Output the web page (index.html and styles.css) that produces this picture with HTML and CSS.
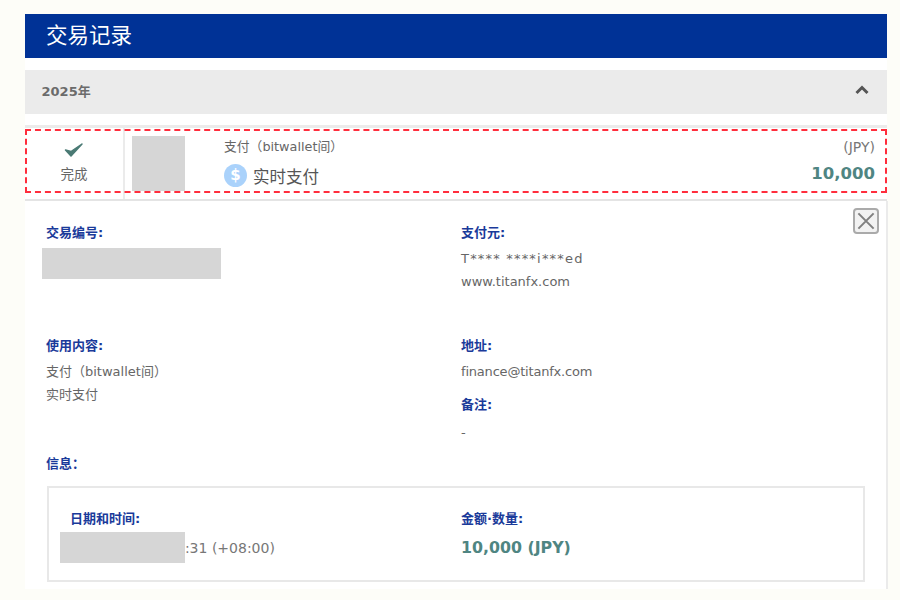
FILE: index.html
```html
<!DOCTYPE html>
<html lang="zh-CN">
<head>
<meta charset="utf-8">
<title>交易记录</title>
<link rel="stylesheet" href="styles.css">
</head>
<body>
<main class="page">
  <h1 class="title">交易记录</h1>
  <div class="year">
    <span>2025年</span>
    <svg class="chevron" width="14" height="10" viewBox="0 0 14 10"><path d="M1.5 8 7 2.5 12.5 8" fill="none" stroke="#555" stroke-width="3"/></svg>
  </div>
  <section class="row">
    <div class="status">
      <svg class="check" width="20" height="16" viewBox="0 0 20 16"><path d="M1.5 8 7 14 18 2 7 9.5Z" fill="#4a7a74" stroke="#4a7a74" stroke-width="1.5" stroke-linejoin="round"/></svg>
      <span>完成</span>
    </div>
    <div class="thumb-cell"><div class="redact thumb"></div></div>
    <div class="summary">
      <div class="kind">支付（bitwallet间）</div>
      <div class="method">
        <span class="coin">$</span>
        <span>实时支付</span>
      </div>
    </div>
    <div class="amount">
      <div class="currency">(JPY)</div>
      <div class="value">10,000</div>
    </div>
    <div class="highlight"></div>
  </section>
  <section class="detail">
    <button class="close" type="button" aria-label="关闭">
      <svg width="26" height="26" viewBox="0 0 26 26"><path d="M4 4 22 22M22 4 4 22" stroke="#808080" stroke-width="2.4" fill="none"/></svg>
    </button>
    <div class="columns">
      <div class="col">
        <div class="block b-id">
          <div class="label">交易编号:</div>
          <div class="redact id"></div>
        </div>
        <div class="block b-use">
          <div class="label">使用内容:</div>
          <div class="text first">支付（bitwallet间）</div>
          <div class="text">实时支付</div>
        </div>
      </div>
      <div class="col">
        <div class="block b-from">
          <div class="label">支付元:</div>
          <div class="text first masked">T**** ****i***ed</div>
          <div class="text">www.titanfx.com</div>
        </div>
        <div class="block b-addr">
          <div class="label">地址:</div>
          <div class="text first tight">finance@titanfx.com</div>
        </div>
        <div class="block b-note">
          <div class="label">备注:</div>
          <div class="text first">-</div>
        </div>
      </div>
    </div>
    <div class="label info">信息：</div>
    <div class="box">
      <div class="cell cell-date">
        <div class="label">日期和时间:</div>
        <div class="when"><div class="redact date"></div><span>2:31 (+08:00)</span></div>
      </div>
      <div class="cell cell-total">
        <div class="label">金额·数量:</div>
        <div class="total">10,000 (JPY)</div>
      </div>
    </div>
  </section>
</main>
</body>
</html>
```

FILE: styles.css
```css
* { box-sizing: border-box; }
html, body { margin: 0; height: 100%; }
body {
  background: #fdfdf8;
  font-family: "DejaVu Sans", "Noto Sans CJK SC", sans-serif;
  color: #666;
  overflow: hidden;
}
.page {
  width: 862px;
  margin-left: 25px;
  padding-top: 14px;
}
.title {
  margin: 0;
  height: 44px;
  padding-left: 21px;
  background: #003296;
  color: #fff;
  font: 400 21.5px/40px "Noto Sans CJK SC", sans-serif;
}
.year {
  margin-top: 12px;
  height: 44px;
  padding: 0 18px 4px 16.5px;
  background: #ebebeb;
  display: flex;
  align-items: center;
  justify-content: space-between;
  font-size: 13px;
  font-weight: 700;
  color: #6b6b6b;
  box-shadow: 0 -12px 0 #fff, 0 11px 0 #fff;
}
.chevron { margin-top: -1px; }
.row {
  position: relative;
  margin-top: 11px;
  height: 76px;
  background: #fff;
  border-top: 3px solid #ebebeb;
  border-bottom: 2px solid #e4e4e4;
  display: flex;
}
.status {
  width: 100px;
  border-right: 2px solid #ebebeb;
  display: flex;
  flex-direction: column;
  align-items: center;
  padding-top: 14px;
  font: 13.5px/18px "Noto Sans CJK SC", sans-serif;
  color: #666;
}
.check { margin-bottom: 6px; }
.thumb-cell { width: 99px; padding: 8px 0 0 7px; }
.redact { background: #d6d6d6; }
.thumb { width: 53px; height: 55px; }
.summary { flex: 1; padding-top: 10px; }
.kind {
  font-size: 12.8px;
  line-height: 18px;
  color: #666;
}
.method {
  display: flex;
  align-items: center;
  gap: 6px;
  margin-top: 8px;
  font: 16.5px/22px "Noto Sans CJK SC", sans-serif;
  color: #555;
}
.coin {
  width: 23px;
  height: 23px;
  border-radius: 50%;
  background: #aad2fb;
  color: #fff;
  font: 700 15px/23px "DejaVu Sans", sans-serif;
  text-align: center;
}
.amount { padding: 10px 12px 0 0; text-align: right; }
.currency { font-size: 14px; line-height: 18px; color: #777; }
.value {
  margin-top: 7px;
  font-size: 16.5px;
  line-height: 22px;
  font-weight: 700;
  color: #4f8582;
}
.highlight {
  position: absolute;
  left: 0;
  right: 0;
  top: 1px;
  height: 64px;
  border: 2px dashed #ff2d3c;
  pointer-events: none;
}
.detail {
  position: relative;
  height: 388px;
  margin-right: -1px;
  background: #fff;
  border-right: 2px solid #ebebeb;
  padding: 0 21px;
}
.close {
  position: absolute;
  top: 7px;
  right: 7px;
  width: 26px;
  height: 26px;
  padding: 0;
  border: 2px solid #aaa;
  border-radius: 4px;
  background: #f2f2f2;
  display: flex;
  align-items: center;
  justify-content: center;
}
.columns { display: grid; grid-template-columns: 415px 1fr; }
.label {
  font: 700 13px/18px "DejaVu Sans", "Noto Sans CJK SC", sans-serif;
  color: #1a3a9a;
}
.text {
  font-size: 13px;
  line-height: 23px;
  color: #666;
  white-space: nowrap;
}
.text.first { margin-top: 5px; }
.masked { letter-spacing: 1.2px; }
.tight { letter-spacing: -0.2px; }
.block { position: relative; }
.b-id { padding-top: 23px; height: 136px; }
.b-from { padding-top: 23px; height: 136px; }
.b-note { margin-top: 7px; }
.b-note .text.first { margin-top: 7px; }
.b-addr { height: 52px; }
.id { width: 179px; height: 31px; margin: 6px 0 0 -4px; }
.info {
  margin-top: 10px;
  font-family: "Noto Sans CJK JP", sans-serif;
}
.box {
  margin: 14px 0 0 1px;
  width: 818px;
  height: 96px;
  border: 2px solid #e8e8e8;
  display: flex;
}
.cell { padding-top: 22px; }
.cell-date { width: 412px; padding-left: 21px; }
.when {
  position: relative;
  margin-top: 8px;
  height: 22px;
  font-size: 14px;
  line-height: 24px;
  color: #777;
  padding-left: 106px;
}
.date { position: absolute; z-index: 1; left: -10px; top: -4px; width: 125px; height: 31px; }
.total {
  margin-top: 9px;
  font-size: 15.8px;
  line-height: 22px;
  font-weight: 700;
  color: #4f8582;
}
```
